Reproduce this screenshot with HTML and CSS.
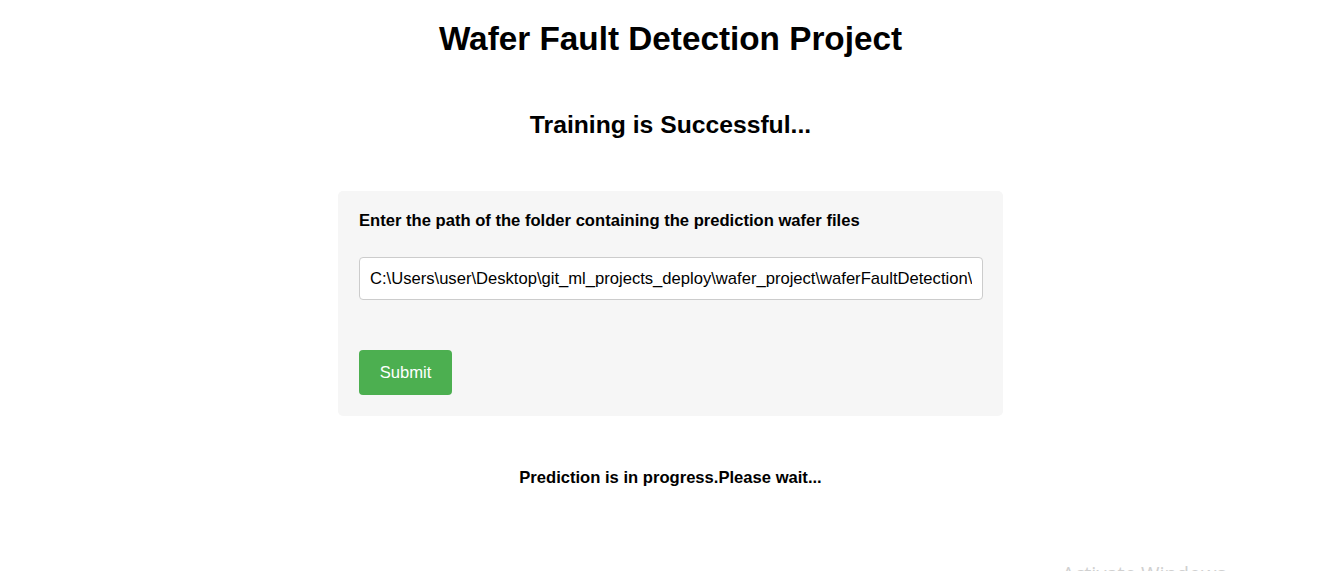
FILE: index.html
```html
<!DOCTYPE html>
<html>
<head>
<meta charset="utf-8">
<title>Wafer Fault Detection Project</title>
<link rel="stylesheet" href="styles.css">
</head>
<body>
<main class="page">
  <h1 class="title">Wafer Fault Detection Project</h1>
  <h2 class="status">Training is Successful...</h2>
  <form class="card">
    <label class="label" for="path">Enter the path of the folder containing the prediction wafer files</label>
    <input class="input" id="path" type="text" value="C:\Users\user\Desktop\git_ml_projects_deploy\wafer_project\waferFaultDetection\Prediction_Batch_files">
    <button class="submit" type="button">Submit</button>
  </form>
  <p class="progress">Prediction is in progress.Please wait...</p>
</main>
<div class="watermark">Activate Windows</div>
</body>
</html>
```
FILE: styles.css
```css
html, body {
  margin: 0;
  padding: 0;
  background: #fff;
  overflow: hidden;
}
body {
  font-family: "Liberation Sans", Arial, sans-serif;
  color: #000;
  height: 571px;
  position: relative;
}
.page {
  display: flex;
  flex-direction: column;
  align-items: center;
  padding-left: 21px;
}
.title {
  margin: 19px 0 0;
  font-size: 33.3px;
  line-height: 40px;
  font-weight: bold;
}
.status {
  margin: 51px 0 0;
  font-size: 24.7px;
  line-height: 30px;
  font-weight: bold;
}
.card {
  margin-top: 51px;
  width: 665px;
  box-sizing: border-box;
  background: #f6f6f6;
  border-radius: 5px;
  padding: 21px 20px 21px 21px;
  display: flex;
  flex-direction: column;
  align-items: flex-start;
}
.label {
  font-size: 16.6px;
  line-height: 18px;
  font-weight: bold;
}
.input {
  margin-top: 27px;
  width: 624px;
  height: 43px;
  box-sizing: border-box;
  border: 1px solid #ccc;
  border-radius: 4px;
  padding: 0 10px;
  font-family: "Liberation Sans", Arial, sans-serif;
  font-size: 16.6px;
  color: #000;
  background: #fff;
}
.submit {
  margin-top: 50px;
  width: 93px;
  height: 45px;
  border: none;
  border-radius: 4px;
  background: #4caf50;
  color: #fff;
  font-family: "Liberation Sans", Arial, sans-serif;
  font-size: 16.6px;
}
.progress {
  margin: 53px 0 0;
  font-size: 16.6px;
  line-height: 18px;
  font-weight: bold;
}
.watermark {
  position: absolute;
  left: 1062px;
  top: 560px;
  font-family: "Open Sans", "Liberation Sans", sans-serif;
  font-size: 20px;
  color: #d0d0d0;
  white-space: nowrap;
}
```
